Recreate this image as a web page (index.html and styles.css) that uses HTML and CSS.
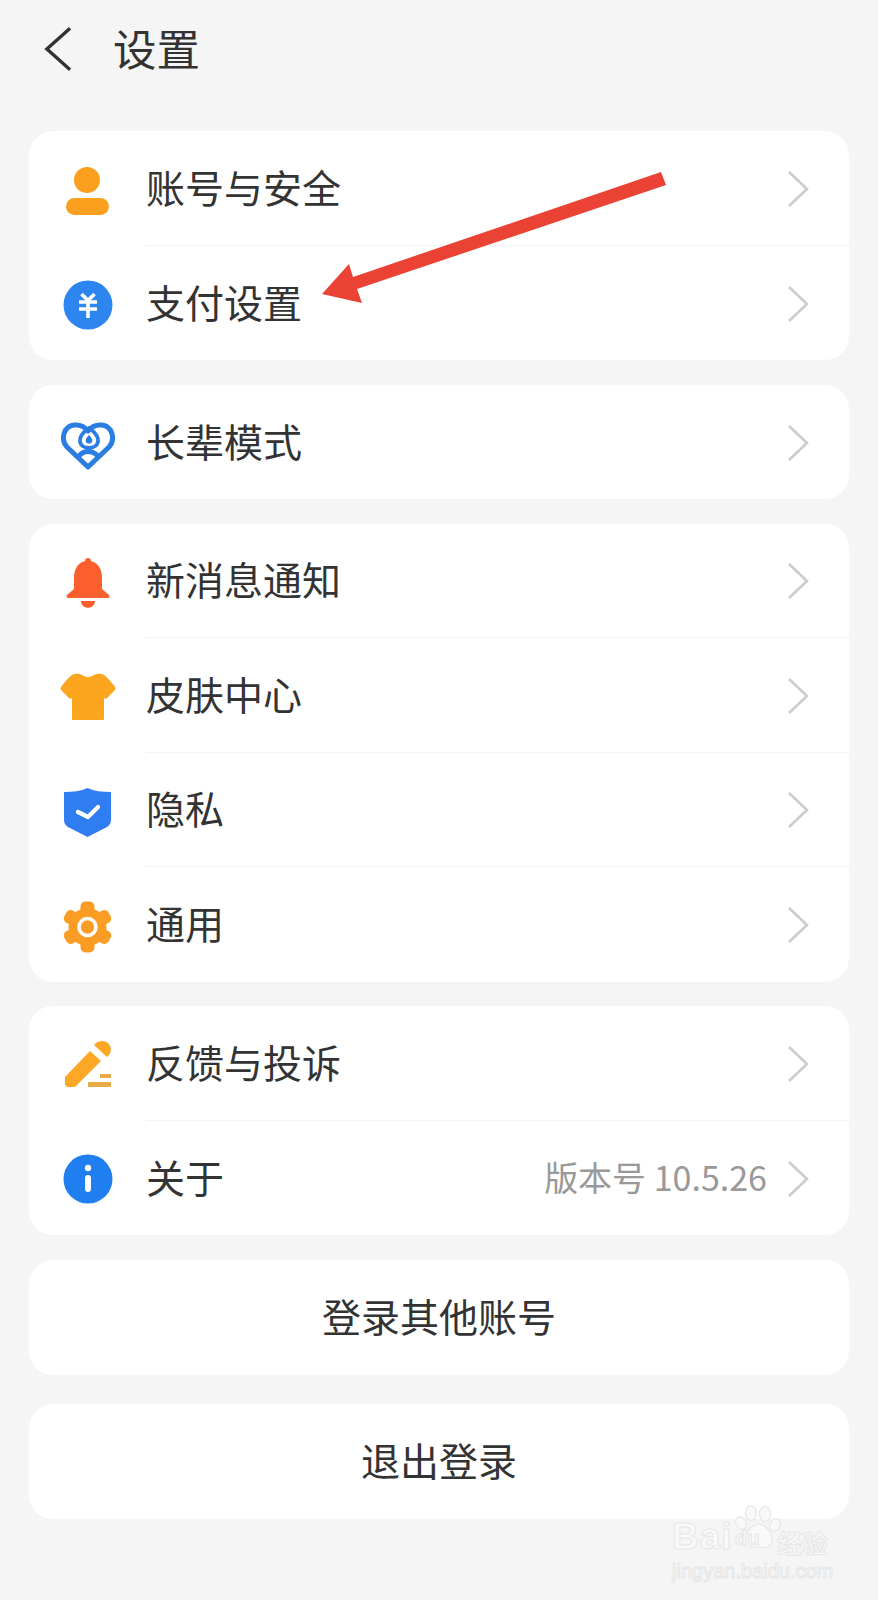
FILE: index.html
```html
<!DOCTYPE html>
<html lang="zh-CN">
<head>
  <meta charset="UTF-8" />
  <meta name="viewport" content="width=device-width, initial-scale=1.0" />
  <title>设置</title>
  <link rel="stylesheet" href="styles.css">
</head>
<body>
<div class="page">

  <header class="header">
    <svg class="back" viewBox="0 0 30 48"><path d="M27 3 L3 24.5 L27 46" /></svg>
    <h1 class="title">设置</h1>
  </header>

  <section class="card">
    <div class="row">
      <svg class="icon" viewBox="0 0 56 56"><circle cx="27" cy="19" r="13" fill="#fb9f1f"/><rect x="6" y="37" width="43" height="17" rx="8.5" fill="#fb9f1f"/></svg>
      <div class="row-body"><span class="label">账号与安全</span><svg class="chevron" viewBox="0 0 22 38"><path d="M2 2 L20 19 L2 36"/></svg></div>
    </div>
    <div class="row">
      <svg class="icon" viewBox="0 0 56 56"><circle cx="28" cy="29" r="24.5" fill="#2d86f0"/><path d="M21.5 18 L28 24.5 L34.5 18 M19 26 H37 M19 33 H37 M28 25 V42" fill="none" stroke="#fff" stroke-width="3.6"/></svg>
      <div class="row-body"><span class="label">支付设置</span><svg class="chevron" viewBox="0 0 22 38"><path d="M2 2 L20 19 L2 36"/></svg></div>
    </div>
  </section>

  <section class="card">
    <div class="row">
      <svg class="icon" viewBox="0 0 56 56">
        <g fill="none" stroke="#2a7de1" stroke-width="5" stroke-linejoin="round" stroke-linecap="round">
          <path d="M28 52 L7 32 C0 24 4 11 14 10 C20 9.500 25 12 28 16 C31 12 36 9.500 42 10 C52 11 56 24 49 32 Z"/>
          <path d="M19 41 C24 35 32 35 38 41"/>
          <path d="M29 13 C22 18 19 22 20 27 C22 35 36 35 38 27 C39 22 36 18 29 13 Z" stroke-width="3.800"/>
        </g>
        <path d="M29 20 C26 23 25 25 26 27 C27 29 31 29 32 27 C33 25 32 23 29 20 Z" fill="#2a7de1"/>
      </svg>
      <div class="row-body"><span class="label">长辈模式</span><svg class="chevron" viewBox="0 0 22 38"><path d="M2 2 L20 19 L2 36"/></svg></div>
    </div>
  </section>

  <section class="card">
    <div class="row">
      <svg class="icon" viewBox="0 0 56 56"><path fill="#fb5f2e" d="M28 4 C30 4 31 5.500 31 7 C39 9 42 16 42 24 L42 35 L49 41 Q50 44 48 44 H8 Q6 44 7 41 L14 35 V24 C14 16 17 9 25 7 C25 5.500 26 4 28 4 Z M21 47 H35 C35 56 21 56 21 47 Z"/></svg>
      <div class="row-body"><span class="label">新消息通知</span><svg class="chevron" viewBox="0 0 22 38"><path d="M2 2 L20 19 L2 36"/></svg></div>
    </div>
    <div class="row">
      <svg class="icon" viewBox="0 0 56 56"><path fill="#fca61d" d="M14 6 Q19 5 22 7 Q28 11 34 7 Q37 5 42 6 Q47 8 55 19 Q56 21 55 22 L46 31 L44 30 V51 Q44 52 43 52 H13 Q12 52 12 51 V30 L10 31 L1 22 Q0 21 1 19 Q9 8 14 6 Z"/></svg>
      <div class="row-body"><span class="label">皮肤中心</span><svg class="chevron" viewBox="0 0 22 38"><path d="M2 2 L20 19 L2 36"/></svg></div>
    </div>
    <div class="row">
      <svg class="icon" viewBox="0 0 56 56"><path fill="#2f7df0" d="M27.500 5 C34 8 42 9 51 9 V36 C51 40 50 42 47 44 L27.500 54 L8 44 C5 42 4 40 4 36 V9 C13 9 21 8 27.500 5 Z"/><path d="M18 29 L28 34 L38 24" fill="none" stroke="#fff" stroke-width="4.200" stroke-linecap="round" stroke-linejoin="round"/></svg>
      <div class="row-body"><span class="label">隐私</span><svg class="chevron" viewBox="0 0 22 38"><path d="M2 2 L20 19 L2 36"/></svg></div>
    </div>
    <div class="row">
      <svg class="icon" viewBox="0 0 56 56">
        <g fill="#fb9d24">
          <circle cx="27.500" cy="30" r="19"/>
          <rect x="20.500" y="4.500" width="14" height="51" rx="5"/>
          <rect x="20.500" y="4.500" width="14" height="51" rx="5" transform="rotate(60 27.500 30)"/>
          <rect x="20.500" y="4.500" width="14" height="51" rx="5" transform="rotate(120 27.500 30)"/>
        </g>
        <circle cx="27.500" cy="30" r="8.500" fill="none" stroke="#fff" stroke-width="3.600"/>
      </svg>
      <div class="row-body"><span class="label">通用</span><svg class="chevron" viewBox="0 0 22 38"><path d="M2 2 L20 19 L2 36"/></svg></div>
    </div>
  </section>

  <section class="card">
    <div class="row">
      <svg class="icon" viewBox="0 0 56 56"><path fill="#fca726" d="M5 41 L30 15 L41 25 L15 51 H8 Q5 51 5 48 Z M34 9 C38 4 44 4 48 7 C52 11 52 17 47 21 Z"/><path fill="#e8ab4a" d="M40 38 H51 V42 H40 Z M28 46 H51 V51 H28 Z"/></svg>
      <div class="row-body"><span class="label">反馈与投诉</span><svg class="chevron" viewBox="0 0 22 38"><path d="M2 2 L20 19 L2 36"/></svg></div>
    </div>
    <div class="row">
      <svg class="icon" viewBox="0 0 56 56"><circle cx="28" cy="28" r="24.500" fill="#1f7ff0"/><circle cx="28" cy="17" r="3.200" fill="#fff"/><rect x="25" y="24" width="6" height="17" rx="3" fill="#fff"/></svg>
      <div class="row-body"><span class="label">关于</span><span class="value">版本号 10.5.26</span><svg class="chevron" viewBox="0 0 22 38"><path d="M2 2 L20 19 L2 36"/></svg></div>
    </div>
  </section>

  <button class="card action">登录其他账号</button>
  <button class="card action action-last">退出登录</button>

  <!-- red annotation arrow -->
  <svg class="arrow" viewBox="320 160 350 150"><polygon points="661,172 666,185 357,289 362,303 322,294 349,264 353,277"/></svg>

  <div class="watermark">
    <div class="wm-top">
      <span class="wm-bai">Bai</span>
      <svg class="wm-paw" viewBox="0 0 50 46">
        <g fill="#f9f9f9" stroke="#e6e6e6" stroke-width="1.200">
          <ellipse cx="17" cy="9" rx="5.500" ry="7.500"/>
          <ellipse cx="31" cy="10" rx="5.500" ry="7.500"/>
          <ellipse cx="7" cy="19" rx="5" ry="6.500" transform="rotate(-25 7 19)"/>
          <ellipse cx="41" cy="21" rx="5" ry="6.500" transform="rotate(25 41 21)"/>
          <path d="M25 20 C33 20 39 32 38 37 C37 44 30 44 25 43 C19 44 11 44 10 37 C9 32 17 20 25 20 Z"/>
        </g>
      </svg>
      <span class="wm-du">du</span>
      <span class="wm-cn">经验</span>
    </div>
    <div class="wm-url">jingyan.baidu.com</div>
  </div>

</div>
</body>
</html>
```
FILE: styles.css
```css
body {
  margin: 0;
  background-color: #f5f5f5;
  color: #333;
  font-family: "Noto Sans CJK SC", "Noto Sans", sans-serif;
}
.page {
  position: relative;
  height: 1600px;
  overflow: hidden;
}
.header {
  display: flex;
  align-items: center;
  height: 96px;
  margin-bottom: 35px;
  padding-left: 44px;
}
.back {
  width: 29px;
  height: 47px;
  fill: none;
  stroke: #333;
  stroke-width: 3.5;
}
.title {
  margin: 0 0 0 40px;
  font-size: 43.5px;
  font-weight: 400;
  line-height: 1;
}
.card {
  display: block;
  box-sizing: border-box;
  width: 820px;
  margin: 0 29px 24.5px;
  background-color: #fff;
  border-radius: 24px;
}
.row {
  display: flex;
  align-items: center;
  height: 114.5px;
  padding-left: 31px;
}
.icon {
  flex: none;
  width: 56px;
  height: 56px;
  margin-top: 2px;
  margin-right: 30px;
}
.row-body {
  flex: 1;
  align-self: stretch;
  display: flex;
  align-items: center;
  padding-top: 2px;
  padding-right: 40px;
  border-bottom: 1px solid #f3f3f3;
}
.row:last-child .row-body {
  border-bottom: 0;
}
.label {
  flex: 1;
  padding-bottom: 5px;
  font-size: 39px;
  line-height: 1;
}
.value {
  margin-right: 20px;
  padding-bottom: 3px;
  color: #999;
  font-family: "Noto Sans CJK SC", Roboto, sans-serif;
  font-size: 34px;
  line-height: 1;
}
.chevron {
  flex: none;
  width: 22px;
  height: 38px;
  fill: none;
  stroke: #ccc;
  stroke-width: 2.6;
}
.action {
  height: 115px;
  padding: 0 0 5px;
  border: 0;
  color: #333;
  font-family: inherit;
  font-size: 39px;
  text-align: center;
}
.action-last {
  margin-top: 29px;
}
.arrow {
  position: absolute;
  left: 320px;
  top: 160px;
  width: 350px;
  height: 150px;
  fill: #ea4335;
}
.watermark {
  position: absolute;
  left: 672px;
  top: 1500px;
  width: 170px;
  color: #f9f9f9;
  -webkit-text-stroke: 1px #e6e6e6;
}
.wm-top {
  position: relative;
  display: flex;
  align-items: flex-end;
  height: 55px;
}
.wm-bai {
  font-family: "Liberation Sans", sans-serif;
  font-size: 37px;
  font-weight: 700;
  line-height: 1;
  letter-spacing: 1px;
}
.wm-paw {
  width: 50px;
  height: 46px;
  margin-bottom: 5px;
  margin-left: 1px;
}
.wm-du {
  position: absolute;
  left: 63px;
  top: 28px;
  font-family: "Liberation Sans", sans-serif;
  font-size: 20px;
  font-weight: 700;
  line-height: 1;
}
.wm-cn {
  margin-left: -6px;
  font-size: 25px;
  font-weight: 700;
  line-height: 1;
}
.wm-url {
  margin-top: 6px;
  font-family: "Liberation Sans", sans-serif;
  font-size: 20px;
  line-height: 1;
  white-space: nowrap;
}
```
